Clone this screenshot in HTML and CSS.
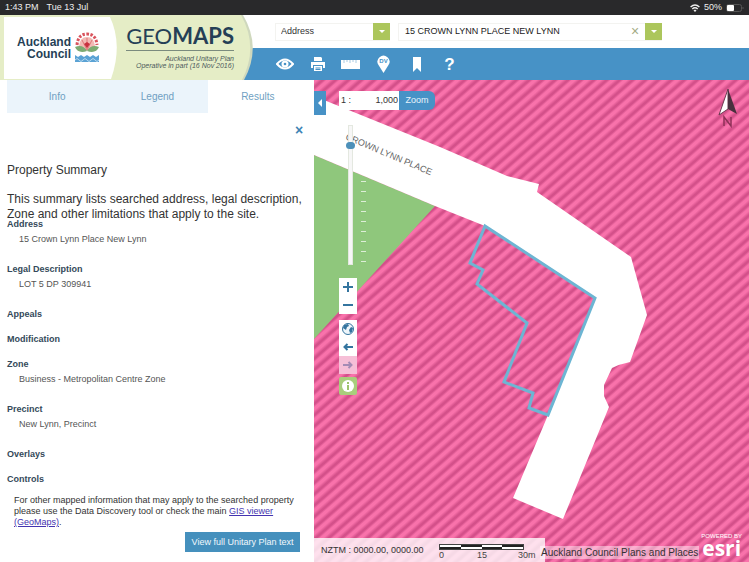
FILE: index.html
```html
<!DOCTYPE html>
<html lang="en">
<head>
<meta charset="utf-8">
<title>GeoMaps - Auckland Unitary Plan</title>
<link rel="stylesheet" href="styles.css">
</head>
<body>
<div class="status">
  <span>1:43 PM</span><span>Tue 13 Jul</span>
  <span class="status-right">
    <svg width="10" height="8" viewBox="0 0 10 8" fill="none" stroke="#eee" stroke-width="1.5"><path d="M.6 3Q5-1 9.400 3M2.300 5Q5 2.500 7.700 5"/><path d="M5 5.500L6.500 6.500 5 8 3.500 6.500z" fill="#eee" stroke="none"/></svg>
    <span>50%</span>
    <svg width="18" height="8" viewBox="0 0 18 8"><rect x=".5" y=".5" width="15" height="7" rx="2" fill="none" stroke="#555"/><rect x="1" y="1" width="7" height="6" rx="1" fill="#fff"/><path d="M17 3v2" stroke="#555"/></svg>
  </span>
</div>

<header class="header">
  <div class="brand">
    <svg class="brand-shape" viewBox="0 0 256 65" preserveAspectRatio="none">
      <path d="M0 0H243Q262 32 244 65H0z" fill="#cfd8bd"/>
      <path d="M0 0H241Q259 32 242 65H0z" fill="#e5edc6"/>
      <path d="M4 2H110Q123 30 111 64H4z" fill="#fff"/>
    </svg>
    <div class="council">
      <span>Auckland<br>Council</span>
      <svg width="26" height="32" viewBox="0 0 26 32">
        <path d="M3 13Q4 2 13 2T23 13" fill="none" stroke="#d9535c" stroke-width="3" stroke-dasharray="2.500 1.500"/>
        <path d="M5 14Q6 5 13 5T21 14L13 19z" fill="#f2b9b4"/>
        <path d="M8 8l5 10 5-10M13 6v10" stroke="#df7779" fill="none"/>
        <path d="M10 12l3 4 3-4-3-2z" fill="#c8303e"/>
        <path d="M1 15Q9 12 13 19Q4 22 1 15zM25 15Q17 12 13 19Q22 22 25 15z" fill="#7dab72"/>
        <path d="M1 23l3 2 3-2 3 2 3-2 3 2 3-2 3 2 3-2v7H1z" fill="#5aa2d4"/>
        <path d="M1 28q2-3 4 0t4 0 4 0 4 0 4 0 4 0" stroke="#b9daf0" fill="none"/>
      </svg>
    </div>
    <div class="product">
      <h1>GEO<b>MAPS</b></h1>
      <p>Auckland Unitary Plan<br>Operative in part (16 Nov 2016)</p>
    </div>
  </div>
  <div class="controls">
    <form class="search">
      <label class="kind"><select aria-label="Search type"><option>Address</option></select><i class="drop"></i></label>
      <div class="query">
        <input type="text" aria-label="Address" value="15 CROWN LYNN PLACE NEW LYNN">
        <button type="button" class="clear" aria-label="Clear">×</button>
        <button type="button" class="drop" aria-label="Show suggestions"></button>
      </div>
    </form>
    <nav class="toolbar">
      <button aria-label="View"><svg width="18" height="14" viewBox="0 0 18 14"><path d="M1 7Q9-2 17 7 9 16 1 7z" fill="none" stroke="#fff" stroke-width="2"/><circle cx="9" cy="7" r="3.500" fill="#fff"/><circle cx="9" cy="7" r="1.300" fill="#4792c6"/></svg></button>
      <button aria-label="Print"><svg width="16" height="16" viewBox="0 0 16 16" fill="#fff"><path d="M4 1h7l1 1v3H4zM1 6h14v6h-2V9H3v3H1zM4 10h8v5H4z"/><path d="M5.500 12h5M5.500 13.500h5" stroke="#4792c6"/></svg></button>
      <button aria-label="Measure"><svg width="19" height="9" viewBox="0 0 19 9"><path d="M0 0h19v9H0z" fill="#fff"/><path d="M3 0v3M6 0v2M9 0v3M12 0v2M15 0v3" stroke="#a8cbe3"/></svg></button>
      <button aria-label="District valuation"><svg width="13" height="18" viewBox="0 0 13 18"><path d="M6.500 18L1.500 10A6 6 0 1 1 11.500 10z" fill="#fff"/><text x="6.500" y="8" text-anchor="middle" class="pin-text">DV</text></svg></button>
      <button aria-label="Bookmark"><svg width="8" height="15" viewBox="0 0 8 15"><path d="M0 0h8v15l-4-4-4 4z" fill="#fff"/></svg></button>
      <button aria-label="Help" class="help">?</button>
    </nav>
  </div>
</header>

<main class="main">
  <aside class="panel">
    <div class="tabs" role="tablist">
      <button role="tab">Info</button><button role="tab">Legend</button><button role="tab" class="active" aria-selected="true">Results</button>
    </div>
    <button class="close" aria-label="Close">×</button>
    <section class="summary">
      <h2>Property Summary</h2>
      <p>This summary lists searched address, legal description, Zone and other limitations that apply to the site.</p>
      <dl>
        <div><dt>Address</dt><dd>15 Crown Lynn Place New Lynn</dd></div>
        <div><dt>Legal Description</dt><dd>LOT 5 DP 309941</dd></div>
        <div><dt>Appeals</dt></div>
        <div><dt>Modification</dt></div>
        <div><dt>Zone</dt><dd>Business - Metropolitan Centre Zone</dd></div>
        <div><dt>Precinct</dt><dd>New Lynn, Precinct</dd></div>
        <div><dt>Overlays</dt></div>
        <div><dt>Controls</dt></div>
      </dl>
      <p class="note">For other mapped information that may apply to the searched property please use the Data Discovery tool or check the main <a href="#">GIS viewer (GeoMaps)</a>.</p>
      <button class="primary">View full Unitary Plan text</button>
    </section>
  </aside>

  <section class="map" aria-label="Map">
    <svg class="canvas" viewBox="314 80 435 482" preserveAspectRatio="xMinYMin slice">
      <defs>
        <linearGradient id="hatch" gradientUnits="userSpaceOnUse" x1="314" y1="80" x2="319.600" y2="86.400" spreadMethod="repeat">
          <stop offset="0" stop-color="#f972ab"/><stop offset=".25" stop-color="#f972ab"/><stop offset=".6" stop-color="#d4508a"/><stop offset=".75" stop-color="#d4508a"/><stop offset="1" stop-color="#f972ab"/>
        </linearGradient>
      </defs>
      <rect x="314" y="80" width="435" height="482" fill="url(#hatch)"/>
      <path d="M314 155L435 206 314 339z" fill="#8fc77c"/>
      <path d="M314 96L440 147 507 176 539 184 537 192 631 257 647 315 630 362Q620 364 612 368L604 385V396L609 407 563 519 513 498 548 415 595 298 485 226 435 206 314 155z" fill="#fff"/>
      <path d="M485 226L595 298 548 415 529 408 533 393 504 382 527 323 477 284 483 270 470 263z" fill="none" stroke="#6db5d3" stroke-width="3"/>
      <text class="road" transform="translate(345 139) rotate(23)">CROWN LYNN PLACE</text>
    </svg>

    <div class="map-top">
      <button class="collapse" aria-label="Collapse panel"></button>
      <form class="scale"><label for="scale">1 :</label><input id="scale" type="text" value="1,000"><button type="button">Zoom</button></form>
      <svg class="north" width="22" height="40" viewBox="0 0 22 40"><path d="M11 1L2 27l9-6z" fill="#fff" stroke="#6c3950"/><path d="M11 1l9 25-9-5z" fill="#49303e"/><path d="M7 38V29l7 9v-9" fill="none" stroke="#8e3158" stroke-width="1.500"/></svg>
    </div>

    <div class="map-tools">
      <div class="slider"><input type="range" min="0" max="100" value="88" aria-label="Zoom level"><i></i></div>
      <div class="group">
        <button aria-label="Zoom in"><svg width="12" height="12" viewBox="0 0 12 12"><path d="M6 1v10M1 6h10"/></svg></button>
        <button aria-label="Zoom out"><svg width="12" height="12" viewBox="0 0 12 12"><path d="M1 6h10"/></svg></button>
      </div>
      <div class="group">
        <button aria-label="Full extent"><svg width="14" height="14" viewBox="0 0 14 14"><circle cx="7" cy="7" r="5.500" fill="#eef6fb" stroke-width="1"/><path d="M3 3l4-1 1 2-2 1-1 3-3-2zM8 8l2-3 2 1-1 4-2 1z" fill="#34759f" stroke="none"/></svg></button>
        <button aria-label="Previous extent"><svg width="12" height="12" viewBox="0 0 12 12"><path d="M11 6H3M5.500 3L2.500 6l3 3"/></svg></button>
        <button class="faded" aria-label="Next extent"><svg width="12" height="12" viewBox="0 0 12 12"><path d="M1 6h8M6.500 3l3 3-3 3"/></svg></button>
      </div>
      <button class="info" aria-label="Identify"><svg width="14" height="14" viewBox="0 0 14 14"><circle cx="7" cy="7" r="6" fill="#fff"/><path d="M7 6v5M7 3v2" stroke="#9dc36c" stroke-width="2"/></svg></button>
    </div>

    <div class="map-bottom">
      <div class="coords">
        <span>NZTM : 0000.00, 0000.00</span>
        <svg width="106" height="24" viewBox="0 0 106 24">
          <rect x=".5" y="6.500" width="84" height="5" fill="#fff" stroke="#444"/>
          <path d="M1 10h21M22 8h21M43 10h20M63 8h21" stroke="#222" stroke-width="2"/>
          <text x="0" y="20">0</text><text x="38" y="20">15</text><text x="79" y="20">30m</text>
        </svg>
      </div>
      <span class="credit">Auckland Council Plans and Places</span>
      <div class="esri"><small>POWERED BY</small><strong>esri</strong></div>
    </div>
  </section>
</main>
</body>
</html>
```

FILE: styles.css
```css
* { box-sizing: border-box; }
body {
  margin: 0;
  min-height: 100vh;
  display: flex;
  flex-direction: column;
  font: 9px/15px "Liberation Sans", Arial, sans-serif;
  color: #333;
  background: #fff;
}
button, input, select { font: inherit; color: inherit; border: 0; padding: 0; margin: 0; background: none; border-radius: 0; }
button { cursor: pointer; }
h1, h2, p, dl, dd { margin: 0; }
svg { display: block; flex: none; }

.status { display: flex; gap: 8px; padding: 0 5px; background: #29292b; color: #eee; }
.status-right { margin-left: auto; display: flex; align-items: center; gap: 4px; }

.header { display: flex; position: relative; }
.brand { position: relative; z-index: 1; width: 256px; height: 65px; flex: none; display: flex; }
.brand-shape { position: absolute; inset: 0; width: 100%; height: 100%; }
.council {
  position: relative; width: 100px; flex: none;
  display: flex; align-items: center; justify-content: flex-end; gap: 3px;
  font-size: 12px; line-height: 12px; font-weight: bold; text-align: right; color: #253f56;
}
.product { position: relative; width: 134px; padding-top: 8px; text-align: right; display: flex; flex-direction: column; align-items: flex-end; }
.product h1 { font: 400 22px/26px Lato, sans-serif; color: #253f56; padding-bottom: 1px; border-bottom: 1px solid #7b8b7e; }
.product h1 b { font-weight: 700; }
.product p { font-size: 7px; line-height: 7px; font-style: italic; padding-top: 4px; color: #4c5a5c; white-space: nowrap; }

.controls { flex: 1; min-width: 0; margin-left: -16px; display: flex; flex-direction: column; }
.search { height: 33px; display: flex; align-items: center; gap: 8px; padding-left: 35px; }
.kind, .query { display: flex; align-items: center; height: 18px; border: 1px solid #f3f3f0; border-right: 0; }
.kind { width: 115px; }
.kind select { flex: 1; appearance: none; padding-left: 5px; }
.query { width: 264px; padding-left: 6px; }
.query input { flex: 1; min-width: 0; outline: 0; color: #222; }
.clear { width: 20px; font-size: 14px; color: #a5ab85; }
.drop { flex: none; width: 17px; height: 17px; background: #acc65c; display: flex; align-items: center; justify-content: center; }
.drop::after { content: ""; border: 3px solid transparent; border-top-color: #fff; border-bottom: 0; }
.toolbar { flex: 1; display: flex; align-items: center; padding-left: 28px; background: #4792c6; }
.toolbar button { width: 33px; height: 32px; display: flex; align-items: center; justify-content: center; color: #fff; }
.toolbar .help { font-size: 17px; font-weight: bold; }
.pin-text { font-size: 6px; font-weight: bold; fill: #4792c6; }

.main { flex: 1; display: flex; }
.panel { width: 314px; flex: none; display: flex; flex-direction: column; padding-bottom: 8px; }
.tabs { display: grid; grid-template-columns: repeat(3, 1fr); padding: 0 6px 0 7px; }
.tabs button { height: 33px; background: #ebf4fb; color: #6f9fc2; font-size: 10px; }
.tabs .active { background: #fff; }
.close { align-self: flex-end; width: 20px; height: 20px; margin: 7px 5px 0 0; color: #3f83b5; font-size: 14px; font-weight: bold; line-height: 20px; }
.summary { padding: 23px 0 0 7px; display: flex; flex-direction: column; }
.summary h2 { font-size: 12px; line-height: 15px; font-weight: normal; color: #333; }
.summary > p { font-size: 12px; line-height: 15px; margin-top: 14px; }
.summary dl { display: flex; flex-direction: column; gap: 10px; margin-top: -5px; }
.summary dt { font-weight: bold; color: #34495a; }
.summary dd { padding: 0 0 5px 12px; color: #555; }
.summary .note { font-size: 9px; line-height: 11px; margin-top: 8px; padding: 0 14px 0 7px; }
.note a { color: #4434b0; }
.primary { align-self: flex-end; height: 20px; width: 115px; margin: 4px 14px 0 0; background: #4590bd; color: #f2f8fc; }

.map { flex: 1; min-width: 0; position: relative; display: flex; flex-direction: column; overflow: hidden; background: #ee659c; }
.canvas { position: absolute; inset: 0; width: 100%; height: 100%; }
.road { font-size: 9px; fill: #666; }
.map-top { position: relative; display: flex; align-items: flex-start; padding: 11px 10px 0 0; height: 45px; }
.collapse { width: 12px; height: 24px; background: #4792c6; display: flex; align-items: center; justify-content: center; }
.collapse::after { content: ""; border: 4px solid transparent; border-right-color: #fff; border-left: 0; }
.scale { display: flex; height: 19px; margin-left: 13px; }
.scale label { width: 20px; padding-left: 2px; line-height: 19px; background: #fff; }
.scale input { width: 40px; padding-right: 1px; text-align: right; background: #fff; }
.scale button { width: 36px; background: #4792c6; color: #e8f4fc; border-radius: 0 6px 6px 0; }
.north { margin: -3px 0 0 auto; }

.map-tools { position: relative; width: 18px; margin-left: 25px; display: flex; flex-direction: column; gap: 6px; }
.slider { position: relative; height: 147px; display: flex; }
.slider input { appearance: none; writing-mode: vertical-lr; direction: rtl; width: 9px; height: 140px; margin: 0 0 0 7px; flex: none; }
.slider input::-webkit-slider-runnable-track { width: 5px; background: #f7f7f7; border: 1px solid #e4e8e0; }
.slider input::-webkit-slider-thumb { appearance: none; width: 9px; height: 7px; margin-left: -3px; border-radius: 4px; background: #4d90b9; }
.slider i { position: absolute; left: 22px; top: 36px; width: 5px; height: 102px; background: repeating-linear-gradient(#ffffffb0 0 1px, transparent 1px 10px); }
.group { background: #fff; }
.group button, .info { display: flex; align-items: center; justify-content: center; width: 18px; height: 18px; }
.group svg { fill: none; stroke: #34759f; stroke-width: 2; }
.group .faded { background: #f6bfd7; }
.group .faded svg { stroke: #a58bb5; }
.info { margin-top: -3px; background: #a9cd7c; border-radius: 2px; }

.map-bottom { position: relative; margin-top: auto; display: flex; align-items: flex-end; }
.coords { height: 24px; display: flex; align-items: center; justify-content: space-between; flex: none; width: 231px; padding-left: 7px; background: #ffffffc8; }
.coords text { font-size: 9px; fill: #444; }
.credit { flex: none; margin: 0 0 3px -5px; font-size: 10px; line-height: 13px; padding: 0 1px; background: #ffffff70; color: #333; }
.esri { margin: 0 7px 0 auto; display: flex; flex-direction: column; align-items: center; color: #fff; }
.esri small { font-size: 6px; line-height: 4px; }
.esri strong { font: 700 21px/20px "Open Sans", sans-serif; padding-bottom: 4px; }
```
